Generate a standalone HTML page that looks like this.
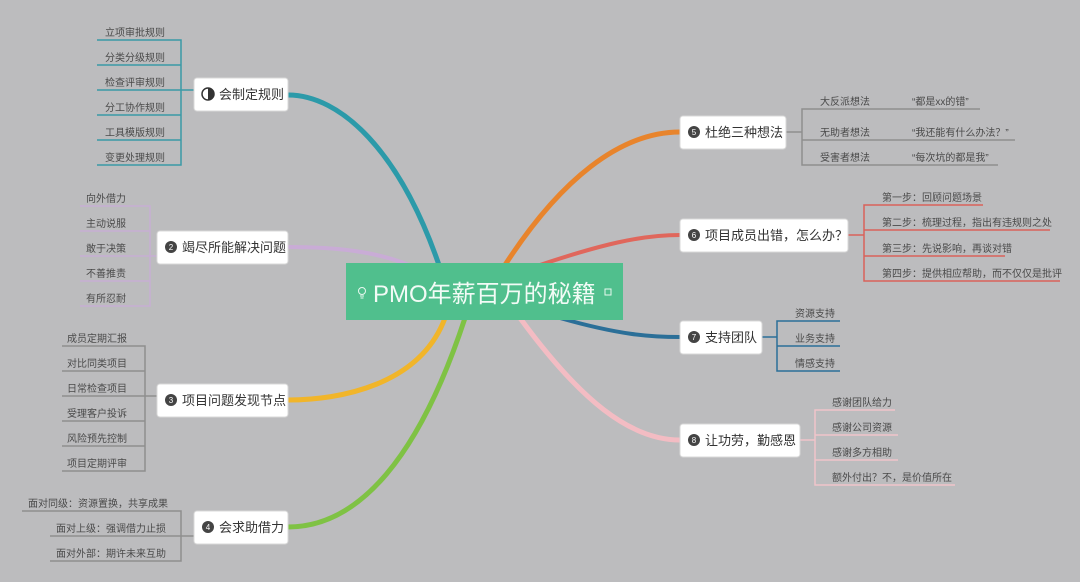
<!DOCTYPE html><html><head><meta charset="utf-8"><style>
html,body{margin:0;padding:0;width:1080px;height:582px;overflow:hidden;background:#bcbcbe;}
body{font-family:"Liberation Sans","Noto Sans CJK SC",sans-serif;}
</style></head><body>
<svg width="1080" height="582" viewBox="0 0 1080 582" xmlns="http://www.w3.org/2000/svg" style="position:absolute;left:0;top:0">
<g fill="none" stroke-linecap="round">
<path d="M440,268 C400,150 340,95 288,95" stroke="#2c9aa9" stroke-width="5"/>
<path d="M420,270 C380,250 330,247 288,247" stroke="#c9acd6" stroke-width="4"/>
<path d="M445,318 C420,385 340,400 288,400" stroke="#f1b52a" stroke-width="5"/>
<path d="M465,318 C420,455 360,527 288,527" stroke="#7fc244" stroke-width="5"/>
<path d="M505,265 C560,180 620,132 680,132" stroke="#e8842c" stroke-width="5"/>
<path d="M540,265 C600,245 640,235 680,235" stroke="#e0675c" stroke-width="4"/>
<path d="M560,318 C620,335 650,337 680,337" stroke="#2b6f98" stroke-width="4"/>
<path d="M520,318 C580,400 630,440 680,440" stroke="#f3bcc3" stroke-width="5"/>
</g>
<g fill="none" stroke-width="1.5">
<g stroke="#3a9aa6"><path d="M97,40H181V165H97M97,65H181M97,90H194M97,115H181M97,140H181"/></g>
<g stroke="#c7aed3"><path d="M80,206H150V306H80M80,231H150M80,256H157M80,281H150"/></g>
<g stroke="#8e8e8e"><path d="M62,346H145V471H62M62,371H145M62,396H157M62,421H145M62,446H145"/></g>
<g stroke="#8e8e8e"><path d="M22,511H181V561H50M50,536H194"/></g>
<g stroke="#8e8e8e"><path d="M786,132H802M820,109H802V165H998M802,140H1015M820,109H980"/></g>
<g stroke="#d9615a"><path d="M848,235H864M983,205H864V281H1060M864,230H1050M864,256H1005"/></g>
<g stroke="#2b6f98"><path d="M762,337H777M840,321H777V371H840M777,346H840"/></g>
<g stroke="#f0c4ca"><path d="M800,440H815M895,410H815V485H955M815,435H898M815,460H898"/></g>
</g>
<g font-size="10" fill="#4a4a4a" font-family="Liberation Sans, Noto Sans CJK SC, sans-serif">
<text x="105" y="36">立项审批规则</text><text x="105" y="61">分类分级规则</text><text x="105" y="86">检查评审规则</text><text x="105" y="111">分工协作规则</text><text x="105" y="136">工具模版规则</text><text x="105" y="161">变更处理规则</text>
<text x="86" y="202">向外借力</text><text x="86" y="227">主动说服</text><text x="86" y="252">敢于决策</text><text x="86" y="277">不善推责</text><text x="86" y="302">有所忍耐</text>
<text x="67" y="342">成员定期汇报</text><text x="67" y="367">对比同类项目</text><text x="67" y="392">日常检查项目</text><text x="67" y="417">受理客户投诉</text><text x="67" y="442">风险预先控制</text><text x="67" y="467">项目定期评审</text>
<text x="28" y="507">面对同级：资源置换，共享成果</text><text x="56" y="532">面对上级：强调借力止损</text><text x="56" y="557">面对外部：期许未来互助</text>
<text x="820" y="105">大反派想法</text><text x="912" y="105">“都是xx的错”</text>
<text x="820" y="136">无助者想法</text><text x="912" y="136">“我还能有什么办法？”</text>
<text x="820" y="161">受害者想法</text><text x="912" y="161">“每次坑的都是我”</text>
<text x="882" y="201">第一步：回顾问题场景</text><text x="882" y="226">第二步：梳理过程，指出有违规则之处</text><text x="882" y="252">第三步：先说影响，再谈对错</text><text x="882" y="277">第四步：提供相应帮助，而不仅仅是批评</text>
<text x="795" y="317">资源支持</text><text x="795" y="342">业务支持</text><text x="795" y="367">情感支持</text>
<text x="832" y="406">感谢团队给力</text><text x="832" y="431">感谢公司资源</text><text x="832" y="456">感谢多方相助</text><text x="832" y="481">额外付出？不，是价值所在</text>
</g>
<rect x="346" y="263" width="277" height="57" fill="#50bf8d"/>
<text x="373" y="302" font-size="24" fill="#f2fbf6" font-family="Liberation Sans, Noto Sans CJK SC, sans-serif">PMO年薪百万的秘籍</text>
<g fill="none" stroke="#e8f8ef" stroke-width="1"><circle cx="362" cy="291" r="3.5"/><path d="M360,296H364M360.5,298H363.5"/></g>
<rect x="605" y="289" width="6" height="6" fill="none" stroke="#e8f8ef"/>
<g fill="#fff" stroke="#d8d8d8">
<rect x="194" y="78" width="94" height="33" rx="3"/><rect x="157" y="231" width="131" height="33" rx="3"/>
<rect x="157" y="384" width="131" height="33" rx="3"/><rect x="194" y="511" width="94" height="33" rx="3"/>
<rect x="680" y="116" width="106" height="33" rx="3"/><rect x="680" y="219" width="168" height="33" rx="3"/>
<rect x="680" y="321" width="82" height="33" rx="3"/><rect x="680" y="424" width="120" height="33" rx="3"/>
</g>
<g fill="#444"><circle cx="208" cy="94" r="6" fill="none" stroke="#333" stroke-width="1.5"/><path d="M208,88A6,6 0 0 1 208,100Z" fill="#333"/>
<circle cx="171" cy="247" r="6"/><circle cx="171" cy="400" r="6"/><circle cx="208" cy="527" r="6"/>
<circle cx="694" cy="132" r="6"/><circle cx="694" cy="235" r="6"/><circle cx="694" cy="337" r="6"/><circle cx="694" cy="440" r="6"/></g>
<g font-size="8" fill="#fff" text-anchor="middle" font-family="Liberation Sans, sans-serif">
<text x="171" y="250">2</text><text x="171" y="403">3</text><text x="208" y="530">4</text><text x="694" y="135">5</text><text x="694" y="238">6</text><text x="694" y="340">7</text><text x="694" y="443">8</text></g>
<g font-size="13" fill="#333" font-family="Liberation Sans, Noto Sans CJK SC, sans-serif">
<text x="219" y="99">会制定规则</text><text x="182" y="252">竭尽所能解决问题</text><text x="182" y="405">项目问题发现节点</text><text x="219" y="532">会求助借力</text>
<text x="705" y="137">杜绝三种想法</text><text x="705" y="240">项目成员出错，怎么办？</text><text x="705" y="342">支持团队</text><text x="705" y="445">让功劳，勤感恩</text></g>
</svg>
</body></html>
